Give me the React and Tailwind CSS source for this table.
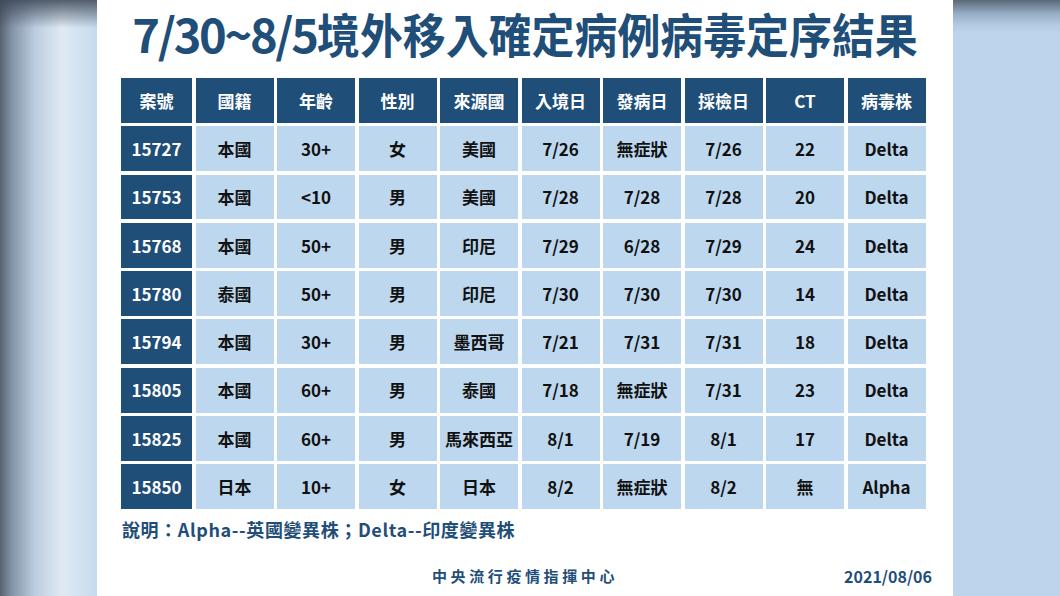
import React from 'react';

const headers = ['案號', '國籍', '年齡', '性別', '來源國', '入境日', '發病日', '採檢日', 'CT', '病毒株'];

const rows = [
  ['15727', '本國', '30+', '女', '美國', '7/26', '無症狀', '7/26', '22', 'Delta'],
  ['15753', '本國', '<10', '男', '美國', '7/28', '7/28', '7/28', '20', 'Delta'],
  ['15768', '本國', '50+', '男', '印尼', '7/29', '6/28', '7/29', '24', 'Delta'],
  ['15780', '泰國', '50+', '男', '印尼', '7/30', '7/30', '7/30', '14', 'Delta'],
  ['15794', '本國', '30+', '男', '墨西哥', '7/21', '7/31', '7/31', '18', 'Delta'],
  ['15805', '本國', '60+', '男', '泰國', '7/18', '無症狀', '7/31', '23', 'Delta'],
  ['15825', '本國', '60+', '男', '馬來西亞', '8/1', '7/19', '8/1', '17', 'Delta'],
  ['15850', '日本', '10+', '女', '日本', '8/2', '無症狀', '8/2', '無', 'Alpha'],
];

const font = "font-['Noto_Sans_CJK_TC','Noto_Sans',sans-serif]";

export default function App() {
  return (
    <div className={`flex h-[596px] w-[1060px] overflow-hidden ${font}`}>
      {/* blurred side, left */}
      <div className="w-[97px] shrink-0 bg-[image:linear-gradient(to_bottom,rgba(60,70,85,0.85),rgba(60,70,85,0)_28px),linear-gradient(to_right,#56626f,#8494a8_12px,#bccde0_35px,#dfeaf4_62px,#c6daee_97px)]" />

      {/* main card */}
      <div className="flex w-[856px] shrink-0 flex-col bg-white pt-[8px]">
        <h1 className="whitespace-nowrap text-center text-[47px] font-bold leading-[50px] text-[#1f4e79]">
          <span className="tracking-[-2.3px]">7/30~8/5</span>
          <span className="inline-block origin-left scale-x-[0.913] mr-[-57px]">境外移入確定病例病毒定序結果</span>
        </h1>

        <div className="ml-[24px] mt-[20px] grid w-[804px] grid-cols-[71px_repeat(9,78px)] auto-rows-[44.8px] gap-[3.5px] text-[17px] font-bold">
          {headers.map((h) => (
            <div key={h} className="flex items-center justify-center bg-[#1f4e79] text-white">
              {h}
            </div>
          ))}
          {rows.map((r) =>
            r.map((c, i) => (
              <div
                key={r[0] + '-' + i}
                className={
                  i === 0
                    ? 'flex items-center justify-center bg-[#1f4e79] text-white'
                    : 'flex items-center justify-center bg-[#bdd7ee] text-[#111]'
                }
              >
                {c}
              </div>
            ))
          )}
        </div>

        <p className="ml-[25px] mt-[8px] text-[18px] font-bold leading-[24px] tracking-[0.6px] text-[#1f4e79]">
          說明：Alpha--英國變異株；Delta--印度變異株
        </p>

        <div className="mt-auto mb-[10px] flex items-center text-[15px] font-bold leading-[20px] text-[#1f4e79]">
          <div className="w-[120px]" />
          <div className="flex-1 text-center tracking-[3.6px]">中央流行疫情指揮中心</div>
          <div className="w-[120px] pr-[21px] text-right text-[16px]">2021/08/06</div>
        </div>
      </div>

      {/* blurred side, right */}
      <div className="flex-1 bg-[image:linear-gradient(to_bottom,#5b6878,#98afc6_14px,#b4cce4_26px,#bcd5ec_34px)]" />
    </div>
  );
}
